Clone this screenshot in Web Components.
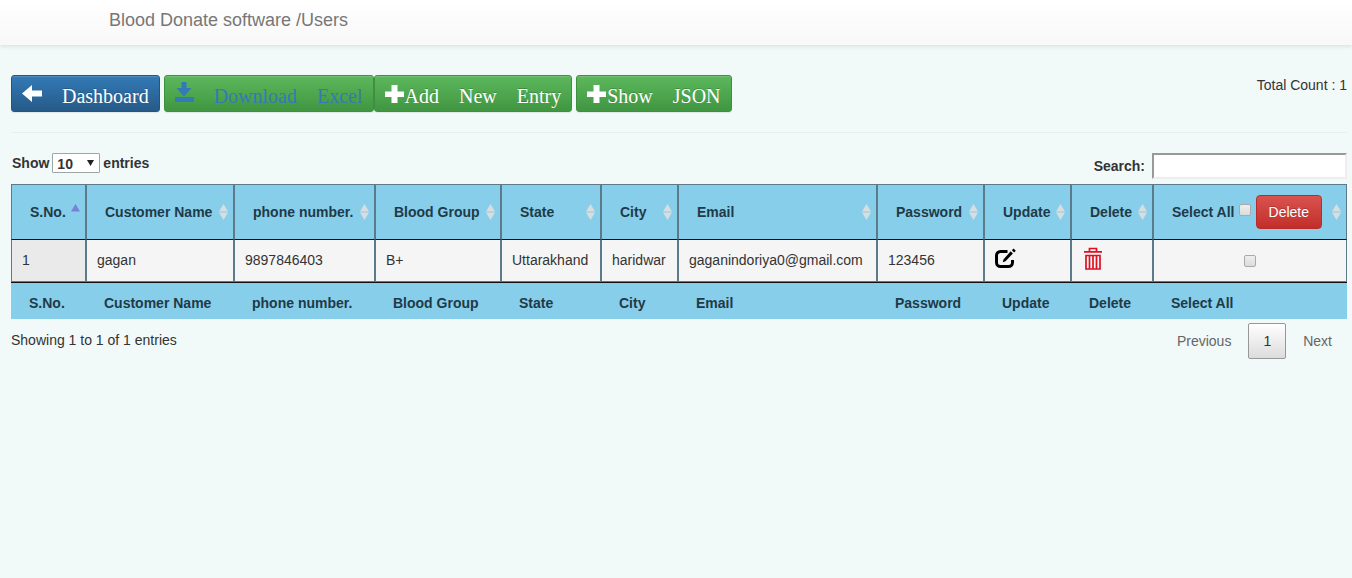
<!DOCTYPE html>
<html lang="en">
<head>
<meta charset="utf-8">
<title>Blood Donate software - Users</title>
<style>
body { margin: 0; background: #f1f9f9; color: #333; font: 14px/20px "Liberation Sans", Arial, sans-serif; }
</style>
</head>
<body>
<users-page></users-page>
<script>
const ICONS = {
  back: '<svg width="20" height="20" viewBox="0 0 20 20"><path fill="currentColor" d="M0 9.500 10 1v5.500h10v6H10V18z"/></svg>',
  download: '<svg width="19" height="20" viewBox="0 0 19 20"><path fill="currentColor" d="M6.500 0h5v6h5L9 14.500 1.500 6h5zM0 15h19v5H0z"/></svg>',
  plus: '<svg width="20" height="20" viewBox="0 0 20 20"><path fill="currentColor" d="M6.500 1h6v6.500H19v5.500h-6.500v6h-6v-6H0V7.500h6.500z"/></svg>',
  edit: '<svg width="22" height="20" viewBox="0 0 22 20"><path fill="none" stroke="currentColor" stroke-width="3" d="M12.500 2.500h-7a4 4 0 0 0-4 4v7a4 4 0 0 0 4 4h8a4 4 0 0 0 4-4V11"/><path fill="currentColor" d="M15.700 2.300l2.200 2.200-7.400 7.700-2.800 1 .9-3zM16.900 1.200 18.500-.4l2.300 2.100-1.700 1.700z"/></svg>',
  trash: '<svg width="18" height="23" viewBox="0 0 18 23"><path fill="none" stroke="currentColor" stroke-width="1.700" d="M0 4.800h18M5.500 4V1.500h7V4M2 8.500h14V22H2zM5.500 8v14M9 8v14M12.500 8v14"/></svg>'
};

function define(name, html, setup) {
  const template = document.createElement('template');
  template.innerHTML = html;
  customElements.define(name, class extends HTMLElement {
    constructor() {
      super();
      this.attachShadow({ mode: 'open' }).append(template.content.cloneNode(true));
    }
    connectedCallback() { if (setup) setup(this, this.shadowRoot); }
  });
}

define('ui-icon', `<style>:host { display: inline-block; } svg { display: block; overflow: visible; }</style><span></span>`,
  (el, root) => { root.querySelector('span').innerHTML = ICONS[el.getAttribute('name')]; });

define('app-header', `<style>
:host { display: block; }
header { height: 45px; box-sizing: border-box; padding: 10px 109px; background: linear-gradient(#fff, #f8f8f8); box-shadow: 0 1px 5px rgba(0,0,0,.12); }
a { color: #777; font-size: 18px; text-decoration: none; }
</style><header><a href="#"><slot></slot></a></header>`);

define('action-button', `<style>
:host { display: inline-flex; --top: #5cb85c; --bottom: #419641; --edge: #3e8f3e; }
:host([kind=primary]) { --top: #337ab7; --bottom: #265a88; --edge: #245580; }
:host([ink=blue]) { --ink: #337ab7; }
button { display: flex; align-items: center; height: 37px; padding: 0 10px; border: 1px solid var(--edge); border-radius: 3px;
  background: linear-gradient(var(--top), var(--bottom)); color: var(--ink, #fff); font: 20px/22px "Liberation Serif", "Times New Roman", serif;
  text-shadow: 0 -1px 0 rgba(0,0,0,.2); box-shadow: inset 0 1px 0 rgba(255,255,255,.15), 0 1px 1px rgba(0,0,0,.075); white-space: nowrap; }
.text { padding-top: 4px; }
:host([ink=blue]) button { text-shadow: none; }
:host([spaced]) .text { margin-left: 20px; }
</style><button type="button"><slot name="icon"></slot><span class="text"><slot></slot></span></button>`);

define('action-bar', `<style>
:host { display: flex; justify-content: space-between; align-items: flex-start; padding-bottom: 20px; border-bottom: 1px solid #e9efef; }
.buttons { display: flex; gap: 4px; }
.pair { display: flex; }
.word { margin-left: 15px; }
</style>
<div class="buttons">
<action-button kind="primary" spaced><ui-icon slot="icon" name="back"></ui-icon>Dashboard</action-button>
<div class="pair">
<action-button ink="blue" spaced><ui-icon slot="icon" name="download" style="padding-bottom:4px"></ui-icon>Download <span class="word">Excel</span></action-button>
<action-button><ui-icon slot="icon" name="plus"></ui-icon>Add <span class="word">New</span> <span class="word">Entry</span></action-button>
</div>
<action-button><ui-icon slot="icon" name="plus"></ui-icon>Show <span class="word">JSON</span></action-button>
</div>
<span>Total Count : 1</span>`);

define('table-controls', `<style>
:host { display: flex; justify-content: space-between; align-items: flex-start; font-weight: bold; margin: 20px 0 5px; }
label { display: flex; align-items: center; }
.length { gap: 3px; padding-left: 1px; }
.search { gap: 7px; }
.pick { position: relative; display: flex; }
select { appearance: none; width: 48px; height: 20px; padding: 0 4px; border: 1px solid #a0a5a5; border-radius: 1px; background: #fff; color: #333; font: inherit; }
.pick svg { position: absolute; right: 6px; top: 7px; pointer-events: none; }
input { box-sizing: border-box; width: 195px; height: 26px; padding: 1px 4px; border: 2px solid; border-color: #999 #eee #eee #999; background: #fff; font: inherit; font-weight: normal; }
</style>
<label class="length">Show <span class="pick"><select><option>10</option><option>25</option><option>50</option><option>100</option></select><svg width="7" height="6" viewBox="0 0 7 6"><path d="M0 0h7L3.500 6z" fill="#222"/></svg></span> entries</label>
<label class="search">Search: <input type="search"></label>`);

define('sort-mark', `<style>
:host { display: block; position: absolute; right: 5px; top: 50%; width: 9px; height: 16px; margin-top: -8px; }
svg { display: block; }
.down, .up { fill: #d8dde0; }
:host([active]) .up { fill: #7a7fd8; }
:host([active]) .down { display: none; }
</style><svg width="9" height="16" viewBox="0 0 9 16"><path class="up" d="M0 7.500 4.500 0 9 7.500z"/><path class="down" d="M0 8.500h9L4.500 16z"/></svg>`);

const COLUMNS = [['S.No.', 75], ['Customer Name', 148], ['phone number.', 141], ['Blood Group', 126], ['State', 100], ['City', 77],
  ['Email', 199], ['Password', 107], ['Update', 87], ['Delete', 82], ['Select All', 194]];
const ROW = ['1', 'gagan', '9897846403', 'B+', 'Uttarakhand', 'haridwar', 'gaganindoriya0@gmail.com', '123456'];

define('users-table', `<style>
:host { display: block; --line: #5b7a8a; --sky: #87ceeb; }
table { width: 100%; table-layout: fixed; border-collapse: separate; border-spacing: 0; }
th, td { box-sizing: border-box; text-align: left; white-space: nowrap; vertical-align: middle; }
thead th { position: relative; height: 56px; padding: 0 0 0 18px; background: var(--sky); border: 1px solid var(--line); border-bottom-color: #111; color: #1f3a47; }
td { height: 42px; padding: 0 10px 1px; background: #f5f5f5; border: 1px solid var(--line); border-top: 0; }
td:first-child { background: #eaeaea; }
td:last-child { text-align: center; }
tfoot th { height: 37px; padding: 3px 0 0 18px; background: var(--sky); border-top: 1px solid #111; color: #1f3a47; }
.all { display: flex; align-items: center; gap: 5px; }
.all label { display: flex; align-items: center; gap: 4px; }
.all input { margin-bottom: 4px; }
input { appearance: none; width: 12px; height: 12px; margin: 0; border: 1px solid #aaa; border-radius: 2px; background: linear-gradient(#eee, #dcdcdc); vertical-align: middle; }
.danger { height: 34px; padding: 0 12px; border: 1px solid #b92c28; border-radius: 4px; background: linear-gradient(#d9534f, #c12e2a); color: #fff; font: 14px/20px "Liberation Sans", Arial, sans-serif; text-shadow: 0 -1px 0 rgba(0,0,0,.2); }
.icon { display: block; width: max-content; padding: 0; border: 0; background: none; color: #000; }
.red { color: #e01020; margin-left: 2px; }
</style><table><colgroup></colgroup><thead><tr></tr></thead><tbody><tr></tr></tbody><tfoot><tr></tr></tfoot></table>`,
  (el, root) => {
    const html = (sel, text) => { root.querySelector(sel).innerHTML = text; };
    html('colgroup', COLUMNS.map(c => `<col style="width:${c[1]}px">`).join(''));
    html('thead tr', COLUMNS.map(([name], i) => `<th scope="col">${i === 10
      ? '<div class="all"><label>Select All<input type="checkbox"></label><button class="danger" type="button">Delete</button></div>' : name}<sort-mark${i ? '' : ' active'}></sort-mark></th>`).join(''));
    html('tbody tr', ROW.map(v => `<td>${v}</td>`).join('')
      + '<td><button class="icon" type="button" aria-label="Update"><ui-icon name="edit"></ui-icon></button></td>'
      + '<td><button class="icon red" type="button" aria-label="Delete"><ui-icon name="trash"></ui-icon></button></td>'
      + '<td><input type="checkbox" aria-label="Select row"></td>');
    html('tfoot tr', COLUMNS.map(([name]) => `<th>${name}</th>`).join(''));
  });

define('table-pager', `<style>
:host { display: flex; justify-content: space-between; align-items: flex-start; margin-top: 4px; }
.info { padding-top: 7px; }
nav { display: flex; gap: 2px; }
a { padding: 7px 14px; border: 1px solid transparent; border-radius: 2px; color: #666; text-decoration: none; }
a.current { color: #333; border-color: #979797; background: linear-gradient(#fff, #dcdcdc); }
</style><span class="info">Showing 1 to 1 of 1 entries</span>
<nav><a href="#">Previous</a><a href="#" class="current">1</a><a href="#">Next</a></nav>`);

define('users-page', `<style>
:host { display: block; }
main { padding: 30px 5px 0 11px; }
</style>
<app-header>Blood Donate software /Users</app-header>
<main><action-bar></action-bar><table-controls></table-controls><users-table></users-table><table-pager></table-pager></main>`);
</script>
</body>
</html>
